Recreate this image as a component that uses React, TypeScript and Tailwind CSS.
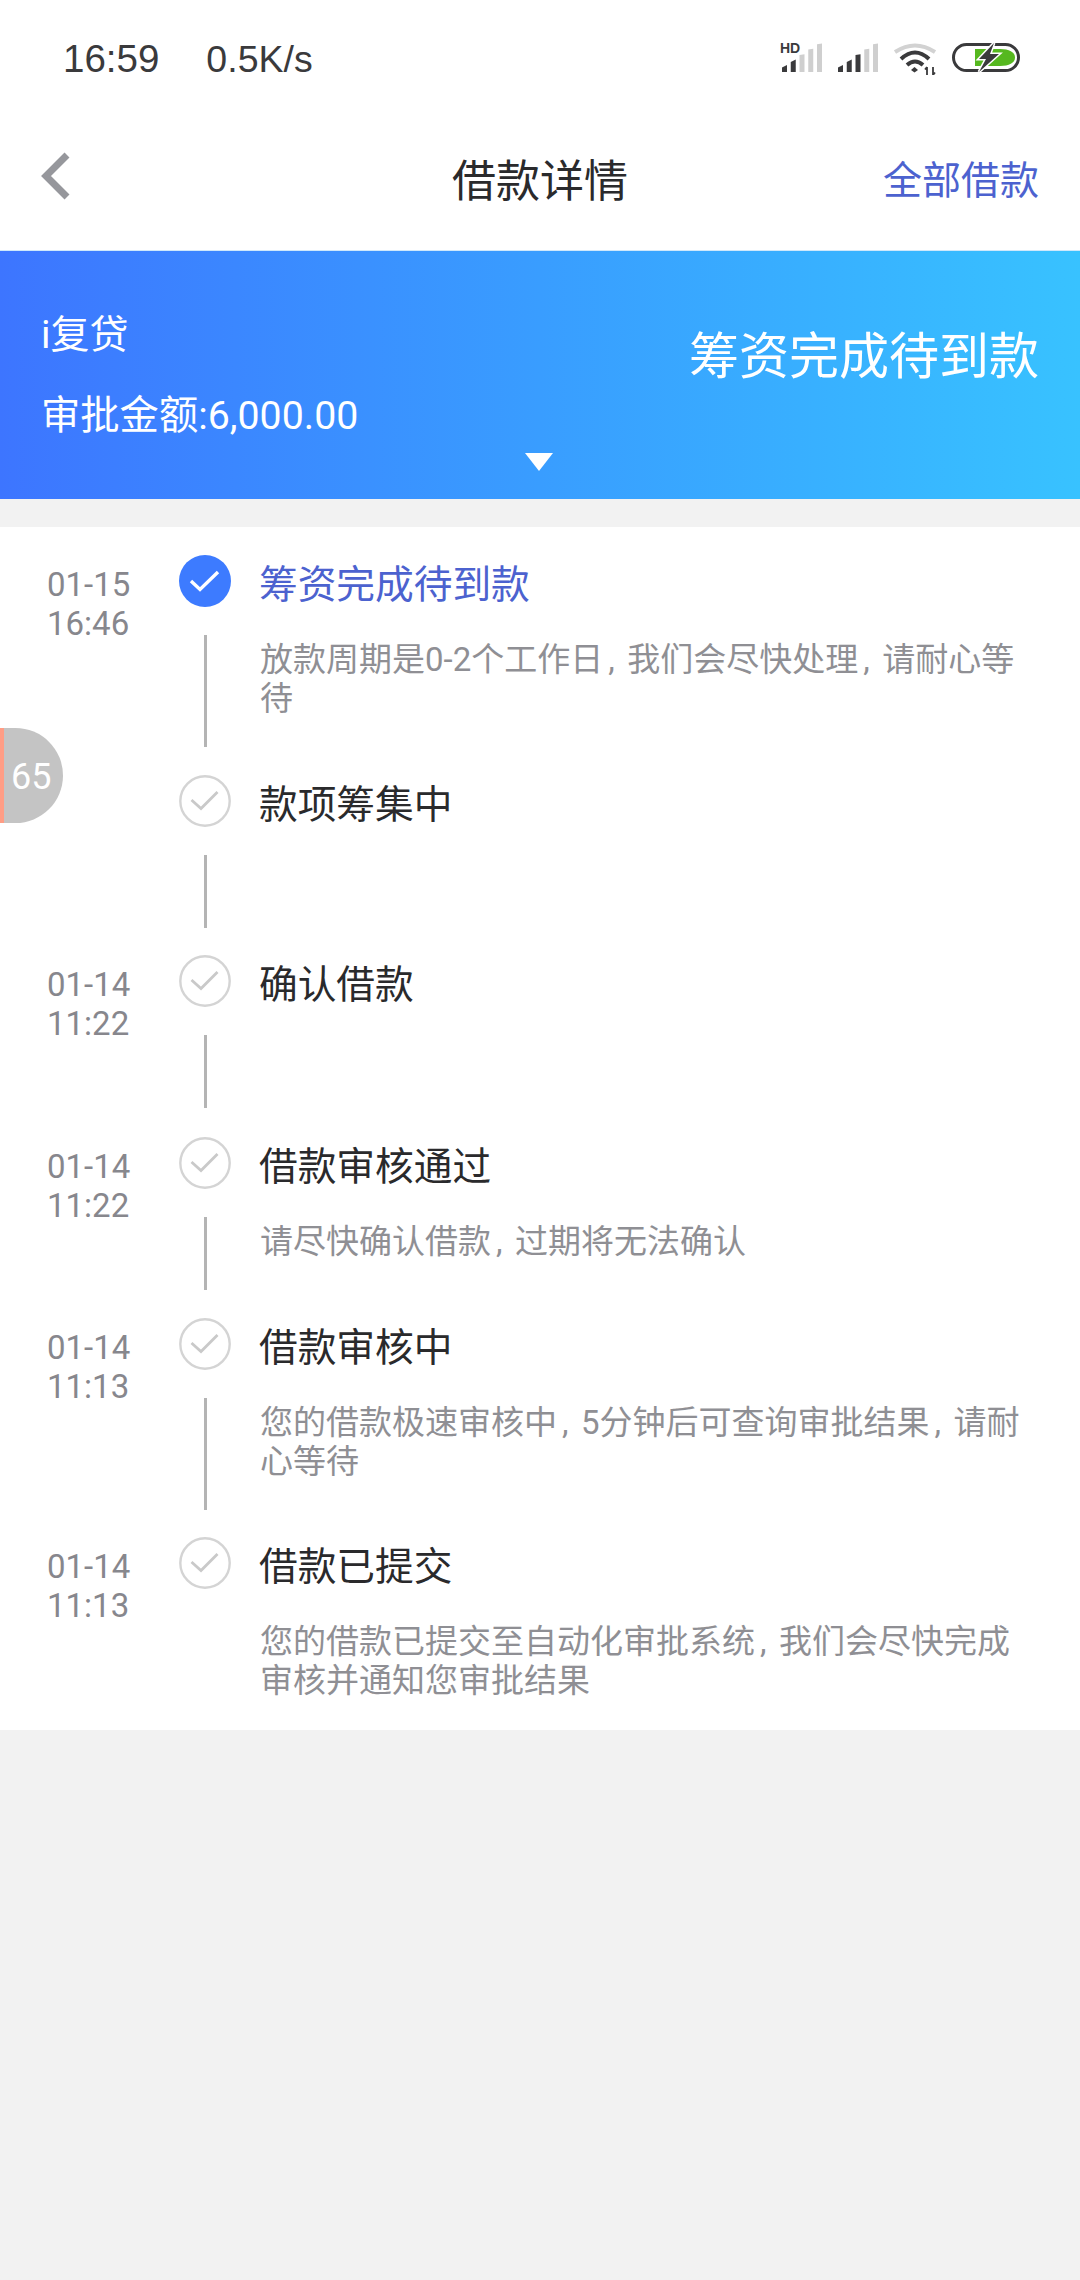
import React from "react";

const font = { fontFamily: 'Roboto, "Noto Sans CJK SC", sans-serif' };

function Check({ active }: { active?: boolean }) {
  if (active)
    return (
      <svg width="52" height="52" viewBox="0 0 52 52" className="block">
        <circle cx="26" cy="26" r="26" fill="#3d7bff" />
        <path d="M12 26 L21 34.5 L39 17" fill="none" stroke="#fff" strokeWidth="3.4" />
      </svg>
    );
  return (
    <svg width="52" height="52" viewBox="0 0 52 52" className="block">
      <circle cx="26" cy="26" r="24.7" fill="#fff" stroke="#d4d4d4" strokeWidth="2.4" />
      <path d="M12.5 25 L22 33.5 L38.5 17" fill="none" stroke="#c9c9c9" strokeWidth="2.8" />
    </svg>
  );
}

type Step = { d?: string; t?: string; title: string; desc?: string[]; h: number; line: number; active?: boolean };

const steps: Step[] = [
  { d: "01-15", t: "16:46", title: "筹资完成待到款", desc: ["放款周期是0-2个工作日,我们会尽快处理,请耐心等", "待"], h: 220, line: 112, active: true },
  { title: "款项筹集中", h: 180, line: 73 },
  { d: "01-14", t: "11:22", title: "确认借款", h: 182, line: 73 },
  { d: "01-14", t: "11:22", title: "借款审核通过", desc: ["请尽快确认借款,过期将无法确认"], h: 181, line: 73 },
  { d: "01-14", t: "11:13", title: "借款审核中", desc: ["您的借款极速审核中,5分钟后可查询审批结果,请耐", "心等待"], h: 219, line: 112 },
  { d: "01-14", t: "11:13", title: "借款已提交", desc: ["您的借款已提交至自动化审批系统,我们会尽快完成", "审核并通知您审批结果"], h: 193, line: 0 },
];

function Line({ text }: { text: string }) {
  const parts = text.split(",");
  return (
    <div>
      {parts.map((p, i) => (
        <React.Fragment key={i}>
          {p}
          {i < parts.length - 1 && <span className="inline-block w-[24px] pl-[5px]">,</span>}
        </React.Fragment>
      ))}
    </div>
  );
}

function Bars({ dark }: { dark: number }) {
  const xs = [0, 8.75, 17.5, 26.25, 35];
  return (
    <svg width="40" height="29" viewBox="0 0 40 29" className="block">
      {xs.map((x, i) => {
        const top = 22 - i * 5.4;
        return (
          <polygon
            key={i}
            points={`${x},${29} ${x},${i < 2 ? top + 2.5 : top + 0.8} ${x + 5},${top} ${x + 5},29`}
            fill={i < dark ? "#3a3a3c" : "#cfcfcf"}
          />
        );
      })}
    </svg>
  );
}

export default function App() {
  return (
    <div style={font} className="relative w-[1080px] h-[2280px] bg-[#f2f2f2] overflow-hidden">
      <div className="bg-white">
        <div className="h-[118px] flex items-start pl-[63px] pr-[60px] pt-[36px] text-[#3a3a3c]">
          <span className="text-[38.5px] leading-[46px] font-['Liberation_Sans',sans-serif]">16:59</span>
          <span className="text-[37.5px] leading-[46px] ml-[47px] font-['Liberation_Sans',sans-serif]">0.5K/s</span>
          <div className="ml-auto flex items-start gap-[16px] mt-[7px]">
            <div className="relative">
              <span className="absolute left-[-2px] top-[0px] text-[14px] leading-[10px] font-bold text-[#3a3a3c] font-['Liberation_Sans',sans-serif]">HD</span>
              <Bars dark={2} />
            </div>
            <Bars dark={3} />
            <svg width="42" height="32" viewBox="0 0 42 32" className="block">
              <path d="M1 9 Q21 -4 41 9" fill="none" stroke="#d2d2d2" strokeWidth="4" />
              <path d="M7 16 Q21 3 35 16" fill="none" stroke="#3a3a3c" strokeWidth="4" />
              <path d="M13 22 Q21 15 29 22" fill="none" stroke="#3a3a3c" strokeWidth="4" />
              <path d="M17 27 L20.5 24 L24 27 L20.5 29.5 Z" fill="#3a3a3c" />
              <path d="M33 24 V32 M31 26.5 L33 24 M39 24 V32 M39 32 L41 29.5" fill="none" stroke="#3a3a3c" strokeWidth="1.8" />
            </svg>
            <svg width="68" height="29" viewBox="0 0 68 29" className="block overflow-visible">
              <rect x="1.5" y="1.5" width="65" height="26" rx="13" fill="#fff" stroke="#3a3a3c" strokeWidth="3" />
              <path d="M23 6 H48 C57 6 63 9 63 14.5 C63 20 57 23 48 23 H23 Z" fill="#56b81f" />
              <path d="M42 0 L27 16 H34 L27 29 L47 11 H38 L42 0 Z" fill="#3a3a3c" stroke="#fff" strokeWidth="3" paintOrder="stroke" />
            </svg>
          </div>
        </div>
        <div className="relative h-[133px] flex items-center justify-center border-b border-b-[#cfe8fb]">
          <svg width="32" height="48" viewBox="0 0 32 48" className="absolute left-[38px] top-[34px]">
            <path d="M29 3 L8 24 L29 45" fill="none" stroke="#96979c" strokeWidth="7" />
          </svg>
          <span className="text-[44px] leading-[60px] text-[#2a2a2c] mt-[-5px]">借款详情</span>
          <span className="absolute right-[41px] top-[36px] text-[39px] leading-[54px] text-[#4c62cf]">全部借款</span>
        </div>
      </div>

      <div className="relative h-[248px] bg-gradient-to-r from-[#3d75ff] to-[#38c2ff] text-white flex justify-between pl-[41px] pr-[41px]">
        <div className="pt-[59px]">
          <div className="text-[39px] leading-[50px]">i复贷</div>
          <div className="text-[39.3px] leading-[50px] mt-[31px]">审批金额:6,000.00</div>
        </div>
        <div className="text-[50px] leading-[66px] pt-[73px]">筹资完成待到款</div>
        <div className="absolute left-[525px] top-[202px] w-0 h-0 border-l-[14.5px] border-r-[14.5px] border-t-[18px] border-l-transparent border-r-transparent border-t-white" />
      </div>

      <div className="mt-[28px] bg-white pt-[28px]">
        {steps.map((s, i) => (
          <div key={i} className="flex" style={{ height: s.h }}>
            <div className="w-[179px] pl-[47px] text-[33px] leading-[39px] text-[#87878d] pt-[10px]">
              {s.d && <div>{s.d}</div>}
              {s.t && <div>{s.t}</div>}
            </div>
            <div className="w-[52px] mr-[28px] flex flex-col items-center">
              <Check active={s.active} />
              {s.line > 0 && <div className="w-[3px] bg-[#b4b4b4] mt-[28px]" style={{ height: s.line }} />}
            </div>
            <div className="flex-1 pt-[4px]">
              <div className={s.active ? "text-[38.7px] leading-[52px] text-[#4c62cf]" : "text-[38.7px] leading-[52px] text-[#2a2a2c]"}>{s.title}</div>
              <div className="mt-[29px] text-[33px] leading-[39px] text-[#8f8f94] whitespace-nowrap pl-[1px]">
                {s.desc?.map((l) => (
                  <Line key={l} text={l} />
                ))}
              </div>
            </div>
          </div>
        ))}
      </div>

      <div className="absolute left-0 top-[728px] w-[63px] h-[95px] bg-[#c4c4c4] rounded-r-[48px] border-l-[4px] border-l-[#ff9d85] text-white text-[36px] leading-[99px] pl-[7px]">65</div>
    </div>
  );
}
